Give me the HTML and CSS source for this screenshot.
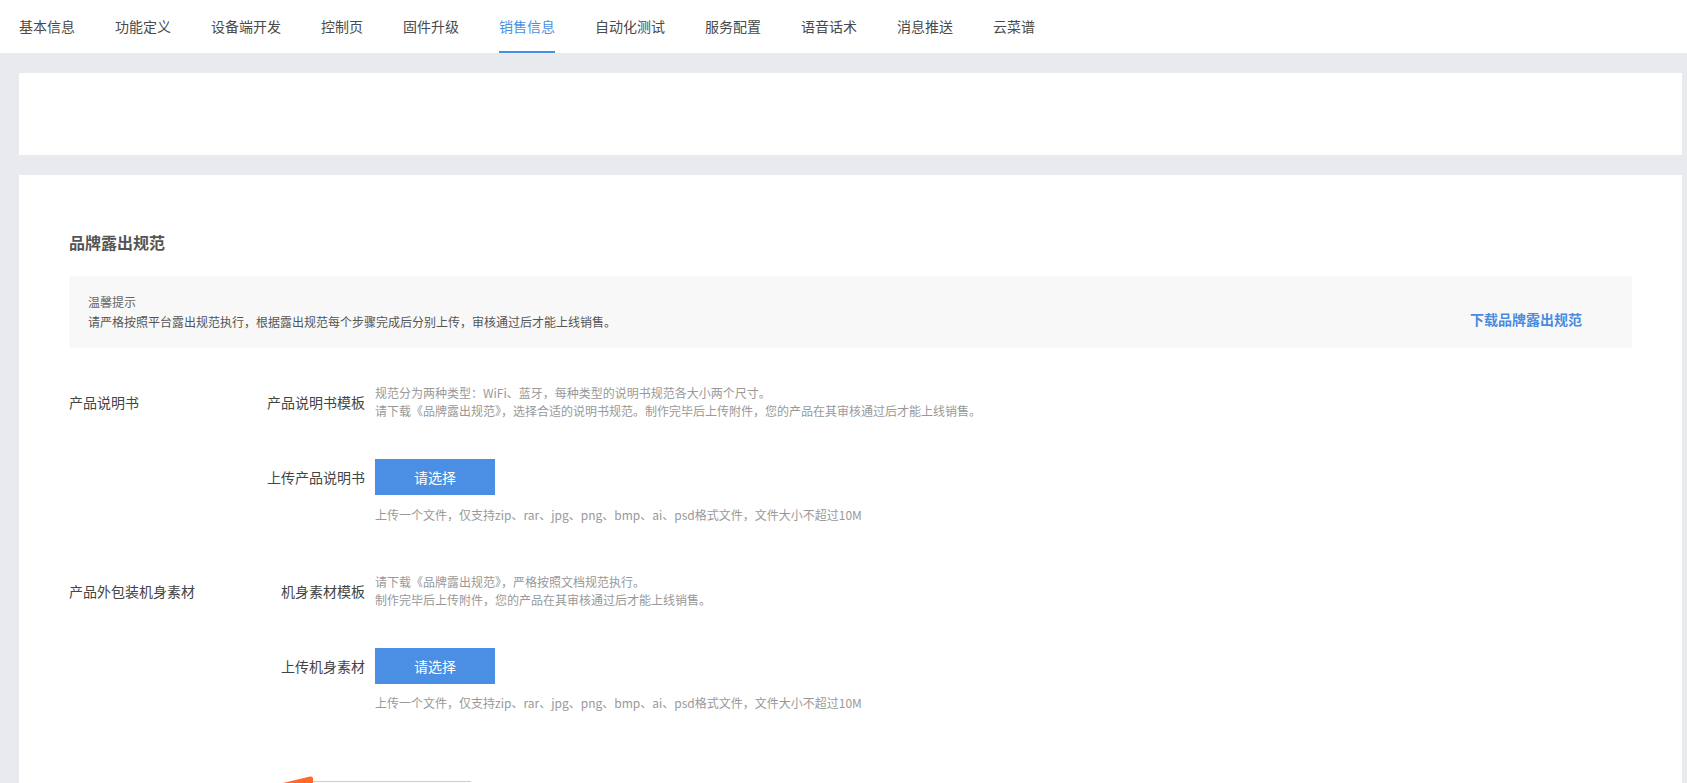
FILE: index.html
```html
<!DOCTYPE html>
<html lang="zh-CN">
<head>
<meta charset="utf-8">
<title>销售信息</title>
<link rel="stylesheet" href="styles.css">
</head>
<body>
<nav class="tabs">
  <a class="tab">基本信息</a>
  <a class="tab">功能定义</a>
  <a class="tab">设备端开发</a>
  <a class="tab">控制页</a>
  <a class="tab">固件升级</a>
  <a class="tab active">销售信息</a>
  <a class="tab">自动化测试</a>
  <a class="tab">服务配置</a>
  <a class="tab">语音话术</a>
  <a class="tab">消息推送</a>
  <a class="tab">云菜谱</a>
</nav>
<main class="content">
  <section class="panel panel-empty"></section>
  <section class="panel panel-main">
    <h2 class="title">品牌露出规范</h2>
    <div class="tip">
      <div class="tip-text">
        <div class="tip-head">温馨提示</div>
        <div class="tip-body">请严格按照平台露出规范执行，根据露出规范每个步骤完成后分别上传，审核通过后才能上线销售。</div>
      </div>
      <a class="tip-link">下载品牌露出规范</a>
    </div>

    <div class="group group-first">
      <div class="group-label">产品说明书</div>
      <div class="group-items">
        <div class="item">
          <div class="item-label">产品说明书模板</div>
          <div class="desc">
            <div>规范分为两种类型：WiFi、蓝牙，每种类型的说明书规范各大小两个尺寸。</div>
            <div>请下载《品牌露出规范》，选择合适的说明书规范。制作完毕后上传附件，您的产品在其审核通过后才能上线销售。</div>
          </div>
        </div>
        <div class="item item-upload">
          <div class="item-label">上传产品说明书</div>
          <div class="upload">
            <button class="btn">请选择</button>
            <div class="hint">上传一个文件，仅支持zip、rar、jpg、png、bmp、ai、psd格式文件，文件大小不超过10M</div>
          </div>
        </div>
      </div>
    </div>

    <div class="group group-second">
      <div class="group-label">产品外包装机身素材</div>
      <div class="group-items">
        <div class="item">
          <div class="item-label">机身素材模板</div>
          <div class="desc">
            <div>请下载《品牌露出规范》，严格按照文档规范执行。</div>
            <div>制作完毕后上传附件，您的产品在其审核通过后才能上线销售。</div>
          </div>
        </div>
        <div class="item item-upload">
          <div class="item-label">上传机身素材</div>
          <div class="upload">
            <button class="btn btn-second">请选择</button>
            <div class="hint">上传一个文件，仅支持zip、rar、jpg、png、bmp、ai、psd格式文件，文件大小不超过10M</div>
          </div>
        </div>
      </div>
    </div>

    <div class="next">
      <svg class="next-corner" width="30" height="8" viewBox="0 0 30 8"><path d="M0 8 L27 1.5 Q29.5 1 30 3 L30 8 Z" fill="#ff6a2c"/></svg>
      <div class="next-line"></div>
    </div>
  </section>
</main>
</body>
</html>
```

FILE: styles.css
```css
html, body {
  margin: 0;
  padding: 0;
  height: 100%;
  overflow: hidden;
}
body {
  background: #e9eaee;
  font-family: "Noto Sans CJK SC", "Noto Sans", "Liberation Sans", sans-serif;
  color: #333;
}

.tabs {
  display: flex;
  gap: 40px;
  height: 53px;
  padding-left: 19px;
  background: #fff;
  box-sizing: border-box;
}
.tab {
  display: flex;
  align-items: center;
  box-sizing: border-box;
  height: 53px;
  border-bottom: 2px solid transparent;
  font-size: 14px;
  color: #4a4a4a;
  white-space: nowrap;
}
.tab.active {
  color: #4a90e2;
  border-bottom-color: #4a90e2;
}

.content {
  padding: 20px 5px 0 19px;
}
.panel {
  background: #fff;
}
.panel-empty {
  height: 82px;
  margin-bottom: 20px;
}
.panel-main {
  padding: 55px 50px 0;
  height: 553px;
  overflow: hidden;
}

.title {
  margin: 0;
  font-size: 16px;
  line-height: 24px;
  font-weight: bold;
  color: #555;
}

.tip {
  margin-top: 22px;
  display: flex;
  justify-content: space-between;
  background: #f8f8f8;
  padding: 16px 50px 16px 19px;
  font-size: 12px;
  line-height: 20px;
}
.tip-head {
  color: #666;
}
.tip-body {
  color: #555;
}
.tip-link {
  align-self: flex-end;
  line-height: 26px;
  font-size: 14px;
  font-weight: bold;
  color: #4a8be0;
  white-space: nowrap;
}

.group {
  display: flex;
}
.group-first {
  margin-top: 36px;
}
.group-second {
  margin-top: 49px;
}
.group-label {
  width: 150px;
  font-size: 14px;
  line-height: 36px;
  color: #444;
  white-space: nowrap;
}
.item {
  display: flex;
  gap: 10px;
}
.item-upload {
  margin-top: 39px;
}
.item-label {
  width: 146px;
  text-align: right;
  font-size: 14px;
  line-height: 36px;
  color: #444;
  white-space: nowrap;
}
.desc {
  font-size: 12px;
  line-height: 18px;
  color: #999;
}
.btn {
  display: block;
  width: 120px;
  height: 36px;
  border: 0;
  margin: 0;
  padding: 0;
  background: #4a8fe3;
  color: #fff;
  font-family: inherit;
  font-size: 14px;
}
.hint {
  margin-top: 11px;
  font-size: 12px;
  line-height: 18px;
  color: #999;
}
.btn-second + .hint {
  margin-top: 10px;
}

.next {
  margin-top: 64px;
  margin-left: 214px;
  display: flex;
  align-items: flex-end;
  height: 7px;
}
.next-corner {
  display: block;
  width: 30px;
  height: 8px;
}
.next-line {
  width: 158px;
  height: 1px;
  margin-bottom: 1px;
  background: #bccfe9;
}
```
